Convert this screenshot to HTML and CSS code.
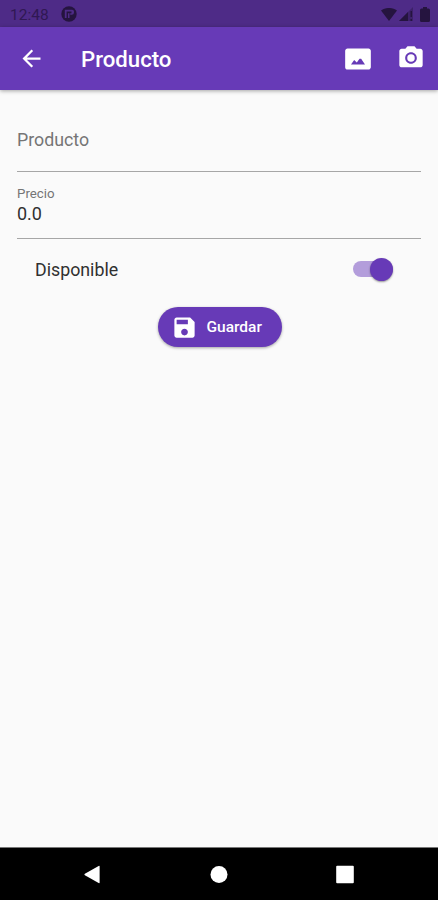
FILE: index.html
```html
<!DOCTYPE html>
<html lang="es">
<head>
<meta charset="utf-8">
<title>Producto</title>
<link rel="stylesheet" href="styles.css">
</head>
<body>
<div class="screen">
  <div class="status">
    <span class="clock">12:48</span>
    <svg class="badge" viewBox="0 0 16 16"><circle cx="8" cy="8" r="7.7"/><path class="cut" d="M3.800 3.800h7.400q1.800 0 1.800 1.800v1q0 2.200-2.200 2.200H9.200V7.300h1.300V5.600H5.600V12H3.800zM7 7.300h1.500V12H7z"/></svg>
    <span class="grow"></span>
    <svg class="wifi" viewBox="0 0 16 13"><path d="M0 2.600C4.500-.9 11.500-.9 16 2.600L8 13z"/></svg>
    <svg class="signal" viewBox="0 0 14 14"><path d="M0 14L14 0v14z" opacity=".4"/><path d="M0 14l9-9v9zM11.500 4h1.500v6h-1.500zM11.500 12H13v2h-1.500z"/></svg>
    <svg class="battery" viewBox="0 0 10 15"><path d="M3 0h4v1.500h1.500Q10 1.500 10 3v10.500Q10 15 8.500 15h-7Q0 15 0 13.500V3q0-1.500 1.500-1.500H3z"/></svg>
  </div>
  <header class="appbar">
    <svg class="icon back" viewBox="0 0 24 24"><path d="M20 11H7.830l5.590-5.590L12 4l-8 8 8 8 1.410-1.410L7.830 13H20v-2z"/></svg>
    <h1 class="title">Producto</h1>
    <svg class="icon photo" viewBox="0 0 24 24"><path d="M21 3H3C2 3 1 4 1 5v14c0 1.100.9 2 2 2h18c1 0 2-1 2-2V5c0-1-1-2-2-2zM6 16.800L8.700 12.800l2.300 2.200 2.300-3.200h1.400L18 16.800H6z"/></svg>
    <svg class="icon camera" viewBox="0 0 24 24"><circle cx="12" cy="12" r="3.200"/><path d="M9 2L7.170 4H4c-1.100 0-2 .9-2 2v12c0 1.100.9 2 2 2h16c1.100 0 2-.9 2-2V6c0-1.100-.9-2-2-2h-3.170L15 2H9zm3 15c-2.760 0-5-2.240-5-5s2.240-5 5-5 5 2.240 5 5-2.240 5-5 5z"/></svg>
  </header>
  <main class="form">
    <div class="field empty"><span class="hint">Producto</span></div>
    <div class="field filled"><span class="label">Precio</span><span class="value">0.0</span></div>
    <div class="switch-row">
      <span>Disponible</span>
      <span class="switch"><span class="thumb"></span></span>
    </div>
    <button class="save">
      <svg class="icon disk" viewBox="0 0 24 24"><path d="M17 3H5c-1.110 0-2 .9-2 2v14c0 1.100.89 2 2 2h14c1.100 0 2-.9 2-2V7l-4-4zm-5 16c-1.660 0-3-1.340-3-3s1.340-3 3-3 3 1.340 3 3-1.340 3-3 3zm3-10H5V5h10v4z"/></svg>
      <span>Guardar</span>
    </button>
  </main>
  <nav class="navbar">
    <svg viewBox="0 0 18 20"><path d="M1.500 9.300L16 1q1-.5 1 .5v17q0 1-1 .5L1.500 10.700Q.3 10 1.500 9.300z"/></svg>
    <svg viewBox="0 0 18 18"><circle cx="9" cy="9" r="8.500"/></svg>
    <svg viewBox="0 0 18 18"><rect x=".2" y=".2" width="17.600" height="17.600" rx="1"/></svg>
  </nav>
</div>
</body>
</html>
```
FILE: styles.css
```css
* { box-sizing: border-box; }
body { margin: 0; font-family: Roboto, "Liberation Sans", sans-serif; }
svg { display: block; flex: none; fill: currentColor; }
.screen { display: flex; flex-direction: column; width: 438px; height: 900px; background: #fafafa; overflow: hidden; }
.status { display: flex; align-items: center; height: 27px; padding: 1px 8px 0 10px; background: #4e2b87; color: #25143f; flex: none; }
.clock { width: 51px; padding-top: 1px; font-size: 15.500px; color: #301853; }
.badge { width: 16px; height: 16px; }
.cut { fill: #4e2b87; }
.grow { flex: 1; }
.wifi { width: 16px; height: 13px; }
.signal { width: 14px; height: 14px; margin-left: 2px; }
.battery { width: 10px; height: 15px; margin-left: 7px; }
.appbar { display: flex; align-items: center; height: 63px; padding: 0 13px 0 18px; background: #673ab7; color: #fff; flex: none; box-shadow: 0 1px 4px rgba(0, 0, 0, 0.350); }
.icon { width: 28px; height: 28px; }
.back { width: 27px; height: 27px; }
.title { flex: 1; margin: 0 0 0 36px; font-size: 22.200px; font-weight: 500; line-height: 28px; }
.camera { margin-left: 25px; margin-bottom: 1px; }
.form { display: flex; flex-direction: column; flex: 1; padding: 17px 17px 0; color: #303030; }
.field { display: flex; flex-direction: column; border-bottom: 1px solid #a6a6a6; }
.empty { height: 65px; padding-top: 21px; }
.hint { font-size: 17.800px; line-height: 24px; color: #757575; }
.filled { height: 67px; padding-top: 14px; }
.label { font-size: 13.300px; line-height: 16px; color: #757575; }
.value { font-size: 18px; line-height: 24px; }
.switch-row { display: flex; align-items: center; justify-content: space-between; height: 60px; padding: 0 28px 0 18px; font-size: 17.800px; }
.switch { display: flex; align-items: center; justify-content: flex-end; width: 40px; height: 16px; border-radius: 8px; background: #b39ddb; }
.thumb { flex: none; width: 23px; height: 23px; border-radius: 50%; background: #673ab7; box-shadow: 0 1px 2px rgba(0, 0, 0, 0.400); }
.save { display: flex; align-items: center; align-self: center; width: 124px; height: 40px; margin: 8px 0 0 1px; padding: 0 0 0 13px; border: 0; border-radius: 20px; background: #673ab7; color: #fff; font: 500 15.500px Roboto, sans-serif; box-shadow: 0 1px 3px rgba(0, 0, 0, 0.350); }
.disk { width: 27px; height: 27px; margin-right: 9px; }
.navbar { display: flex; align-items: center; justify-content: space-between; height: 53px; padding: 0 84px 0 83px; border-top: 1px solid #777; background: #000; color: #fff; flex: none; }
.navbar svg { width: 18px; height: 19px; }
```
